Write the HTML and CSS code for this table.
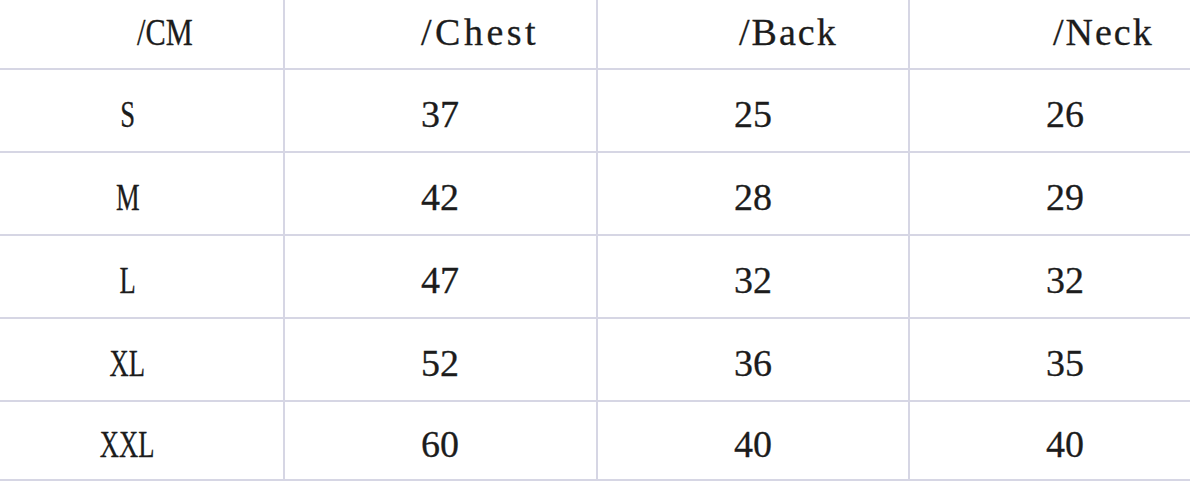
FILE: index.html
```html
<!DOCTYPE html>
<html lang="en">
<head>
<meta charset="utf-8">
<title>Size chart</title>
<link rel="stylesheet" href="styles.css">
</head>
<body>
<div class="size-table">
  <div class="cell cell-head cell-corner"><span class="narrow narrow-left">/CM</span></div>
  <div class="cell cell-head"><span class="head-text head-wide">/Chest</span></div>
  <div class="cell cell-head cell-back"><span class="head-text">/Back</span></div>
  <div class="cell cell-head cell-neck"><span class="head-text">/Neck</span></div>

  <div class="cell cell-size"><span class="narrow">S</span></div>
  <div class="cell">37</div>
  <div class="cell">25</div>
  <div class="cell">26</div>

  <div class="cell cell-size"><span class="narrow">M</span></div>
  <div class="cell">42</div>
  <div class="cell">28</div>
  <div class="cell">29</div>

  <div class="cell cell-size"><span class="narrow">L</span></div>
  <div class="cell">47</div>
  <div class="cell">32</div>
  <div class="cell">32</div>

  <div class="cell cell-size"><span class="narrow">XL</span></div>
  <div class="cell">52</div>
  <div class="cell">36</div>
  <div class="cell">35</div>

  <div class="cell cell-size"><span class="narrow">XXL</span></div>
  <div class="cell">60</div>
  <div class="cell">40</div>
  <div class="cell">40</div>
</div>
</body>
</html>
```

FILE: styles.css
```css
html, body {
  margin: 0;
  padding: 0;
  background: #ffffff;
}

.size-table {
  display: grid;
  grid-template-columns: 283px 311px 310px 1fr;
  grid-template-rows: 68px repeat(4, 81px) 77px;
  gap: 2px;
  width: 1190px;
  background: #d6d6e4;
  border-bottom: 2px solid #d6d6e4;
  font-family: "Liberation Serif", serif;
  font-size: 38px;
  color: #1c1c1c;
  -webkit-text-stroke: 0.3px #1c1c1c;
}

.cell {
  background: #ffffff;
  display: flex;
  align-items: center;
  padding-left: 136px;
  padding-top: 6px;
  box-sizing: border-box;
  white-space: nowrap;
}

.cell-head {
  padding-top: 0;
  padding-bottom: 4px;
}

.cell-size {
  justify-content: center;
  padding-left: 0;
  padding-right: 28px;
}

.cell-corner {
  justify-content: flex-start;
  padding-left: 137px;
}

.cell-back {
  padding-left: 141px;
}

.cell-neck {
  padding-left: 143px;
}

.narrow {
  display: inline-block;
  transform: scaleX(0.7);
}

.narrow-left {
  transform-origin: left center;
  transform: scaleX(0.8);
}

.head-text {
  letter-spacing: 2px;
}

.head-wide {
  letter-spacing: 3.5px;
}
```
